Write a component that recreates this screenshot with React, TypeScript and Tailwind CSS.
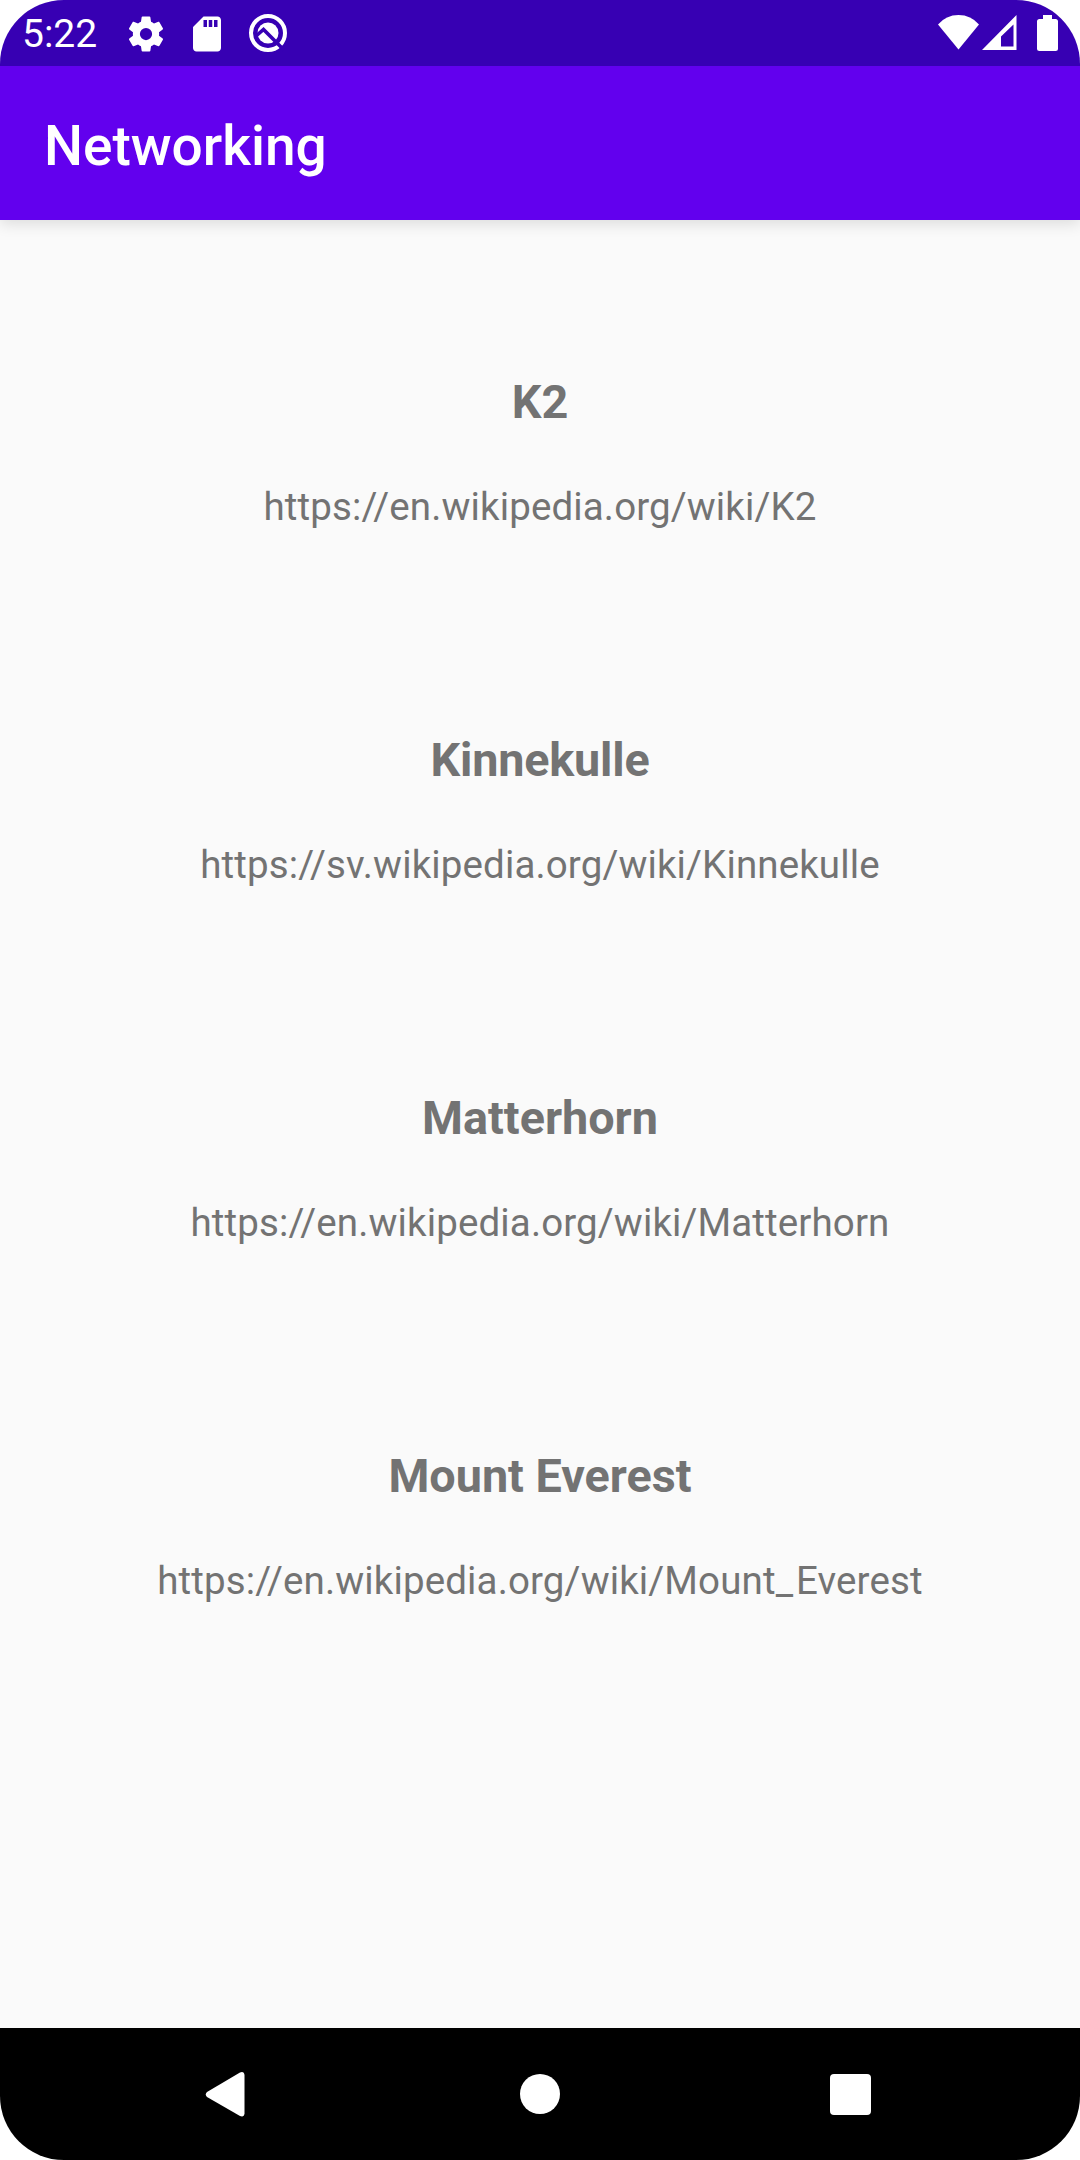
import type { ReactNode } from "react";

type Mountain = { name: string; url: ReactNode; tracking: string };

const mountains: Mountain[] = [
  { name: "K2", url: "https://en.wikipedia.org/wiki/K2", tracking: "tracking-normal" },
  { name: "Kinnekulle", url: "https://sv.wikipedia.org/wiki/Kinnekulle", tracking: "tracking-[-0.2px]" },
  { name: "Matterhorn", url: "https://en.wikipedia.org/wiki/Matterhorn", tracking: "tracking-normal" },
  {
    name: "Mount Everest",
    url: (
      <>
        https://en.wikipedia.org/wiki/Mount<span className="tracking-[3px]">_</span>Everest
      </>
    ),
    tracking: "tracking-normal",
  },
];

function StatusBar() {
  return (
    <div className="relative z-10 flex h-[66px] shrink-0 items-center justify-between bg-[#3700b3] pr-[21px] pl-[22px] text-white">
      <div className="flex items-center">
        <span className="w-[103px] pt-[2px] text-[39px] leading-[66px]">5:22</span>
        <svg className="mt-px h-[42px] w-[42px]" viewBox="0 0 24 24" fill="currentColor">
          <path d="M19.43 12.98c.04-.32.07-.64.07-.98s-.03-.66-.07-.98l2.11-1.65c.19-.15.24-.42.12-.64l-2-3.46c-.12-.22-.39-.3-.61-.22l-2.49 1c-.52-.4-1.08-.73-1.69-.98l-.38-2.65C14.46 2.18 14.25 2 14 2h-4c-.25 0-.46.18-.49.42l-.38 2.65c-.61.25-1.17.59-1.69.98l-2.49-1c-.23-.09-.49 0-.61.22l-2 3.46c-.13.22-.07.49.12.64l2.11 1.65c-.04.32-.07.65-.07.98s.03.66.07.98l-2.11 1.65c-.19.15-.24.42-.12.64l2 3.46c.12.22.39.3.61.22l2.49-1c.52.4 1.08.73 1.69.98l.38 2.65c.03.24.24.42.49.42h4c.25 0 .46-.18.49-.42l.38-2.65c.61-.25 1.17-.59 1.69-.98l2.49 1c.23.09.49 0 .61-.22l2-3.46c.12-.22.07-.49-.12-.64l-2.11-1.65zM12 15.5A3.5 3.5 0 1 1 12 8.5a3.5 3.5 0 0 1 0 7z" />
        </svg>
        <svg className="mt-px ml-[19px] h-[42px] w-[42px]" viewBox="0 0 24 24" fill="currentColor">
          <path d="M18 2h-8L4.02 8 4 20c0 1.1.9 2 2 2h12c1.1 0 2-.9 2-2V4c0-1.1-.9-2-2-2zm-6 6h-2V4h2v4zm3 0h-2V4h2v4zm3 0h-2V4h2v4z" />
        </svg>
        <svg className="ml-[19px] h-[42px] w-[42px]" viewBox="0 0 42 42" fill="none" stroke="currentColor">
          <circle cx="21" cy="21" r="17" strokeWidth="4" />
          <circle cx="21" cy="21" r="10.5" fill="currentColor" stroke="none" />
          <path d="M8.500 24.500L16.500 17.500L37 38" stroke="#3700b3" strokeWidth="3.600" />
        </svg>
      </div>
      <svg className="h-[42px] w-[122px]" viewBox="0 0 122 42" fill="currentColor">
        <path d="M1 12.500Q9 3 21.500 3T42 12.500L21.500 37.500z" />
        <path fillRule="evenodd" d="M45 38L79.500 3v35zM64 34.500h12.500V12.500L64 24.500z" />
        <path d="M106 3h9v4h3.500q2.500 0 2.500 2.500V36.500q0 2.500-2.500 2.500h-16q-2.500 0-2.500-2.500V9.500Q100 7 102.500 7h3.500z" />
      </svg>
    </div>
  );
}

function NavigationBar() {
  return (
    <nav className="grid h-[132px] shrink-0 grid-cols-[230px_620px_230px] bg-black text-white">
      <div className="flex items-center justify-end">
        <svg className="mr-[-15px] h-[46px] w-[40px]" viewBox="0 0 40 46" fill="currentColor">
          <path d="M2 21L35 1.500q4-1.500 4.500 2.500v38.500q-.5 4-4.500 2.500L2 26q-2.500-2.500 0-5z" />
        </svg>
      </div>
      <div className="flex items-center justify-center">
        <div className="size-10 rounded-full bg-white" />
      </div>
      <div className="flex items-center">
        <div className="mt-px ml-[-20px] size-[41px] rounded bg-white" />
      </div>
    </nav>
  );
}

export default function App() {
  return (
    <div className="h-[2160px] w-[1080px] bg-white font-['Roboto',sans-serif]">
      <div className="flex h-full flex-col overflow-hidden rounded-[64px] bg-[#fafafa]">
        <StatusBar />
        <header className="flex h-[154px] shrink-0 items-center bg-[#6200ee] pt-[7px] pl-11 text-[55px] font-medium text-white shadow-[0_4px_14px_rgba(0,0,0,0.12)]">
          Networking
        </header>
        <main className="flex-1 pt-[144px] text-center text-[#737373]">
          {mountains.map((m) => (
            <section key={m.name} className="h-[358px]">
              <h2 className={`text-[46.75px] leading-[76px] font-bold ${m.tracking}`}>{m.name}</h2>
              <p className="mt-[39px] text-[38.5px] leading-[56px] tracking-[0.13px]">{m.url}</p>
            </section>
          ))}
        </main>
        <NavigationBar />
      </div>
    </div>
  );
}
